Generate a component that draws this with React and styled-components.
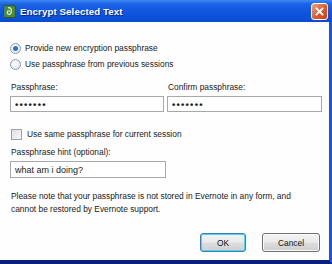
import React from 'react'
import styled, { createGlobalStyle } from 'styled-components'

const Global = createGlobalStyle`
  html, body { margin: 0; padding: 0; background: #fff; }
  body { font-family: "Liberation Sans", Arial, sans-serif; }
`

const Window = styled.div`
  width: 332px;
  height: 264px;
  display: flex;
  flex-direction: column;
  box-sizing: border-box;
  overflow: hidden;
`

const TitleBar = styled.div`
  height: 22px;
  flex: none;
  display: flex;
  align-items: center;
  padding: 0 4px 0 3px;
  background: linear-gradient(#3d8cf5 0%, #1b62e6 18%, #0d55de 60%, #0a4cd0 100%);
  color: #fff;
  gap: 4px;
`

const AppIcon = styled.div`
  width: 11px;
  height: 11px;
  border-radius: 2px;
  background: #4a8a3a;
  border: 1px solid #2d5a22;
  display: flex;
  align-items: center;
  justify-content: center;
`

const Title = styled.div`
  flex: 1;
  font-weight: bold;
  font-size: 9.7px;
  letter-spacing: 0.1px;
  text-shadow: 1px 1px 0 #0a2a8a;
`

const CloseBtn = styled.div`
  width: 15px;
  height: 15px;
  border: 1px solid #fff;
  border-radius: 3px;
  background: linear-gradient(135deg, #f0a080, #e05a2a 55%, #c8401a);
  display: flex;
  align-items: center;
  justify-content: center;
`

const Frame = styled.div`
  flex: 1;
  display: flex;
  flex-direction: column;
  border-right: 3px solid #1456e0;
  border-bottom: 4px solid #0a1f7a;
  background: #fefefe;
`

const Body = styled.div`
  flex: 1;
  display: flex;
  flex-direction: column;
  padding: 18px 8px 0 10px;
  font-size: 8.4px;
  color: #1a1a1a;
`

const RadioRow = styled.label`
  display: flex;
  align-items: center;
  gap: 4px;
  height: 16px;
`

const Radio = styled.span`
  width: 9px;
  height: 9px;
  border-radius: 50%;
  border: 1px solid #8a9aae;
  background: radial-gradient(circle at 40% 40%, #fff, #dde3ea);
  display: flex;
  align-items: center;
  justify-content: center;
  &::after {
    content: '';
    width: 5px;
    height: 5px;
    border-radius: 50%;
    background: ${p => (p.$on ? '#2d6fcf' : 'transparent')};
  }
`

const Fields = styled.div`
  display: grid;
  grid-template-columns: 154px 155px;
  column-gap: 3px;
  margin-top: 10px;
`

const Field = styled.div`
  display: flex;
  flex-direction: column;
  gap: 3px;
`

const Label = styled.div`
  height: 11px;
  line-height: 11px;
  padding-left: 1px;
`

const Input = styled.div`
  height: ${p => p.$h || 16}px;
  box-sizing: border-box;
  border: 1px solid #a8a8a8;
  background: #fff;
  display: flex;
  align-items: center;
  padding-left: 4px;
  width: ${p => p.$w || 'auto'};
  font-size: ${p => (p.$dots ? '9.5px' : '9px')};
  letter-spacing: ${p => (p.$dots ? '1.2px' : '0')};
  font-weight: ${p => (p.$dots ? 'bold' : 'normal')};
`

const CheckRow = styled.label`
  display: flex;
  align-items: center;
  gap: 5px;
  margin-top: 16px;
  padding-left: 1px;
  height: 12px;
`

const Box = styled.span`
  width: 9px;
  height: 9px;
  border: 1px solid #9aa0a8;
  background: linear-gradient(135deg, #dcdfe3, #f7f7f7);
`

const Hint = styled(Field)`
  margin-top: 7px;
`

const Note = styled.p`
  margin: 12px 0 0 1px;
  line-height: 12.5px;
  white-space: nowrap;
`

const Buttons = styled.div`
  margin-top: auto;
  margin-bottom: 8px;
  display: flex;
  justify-content: flex-end;
  gap: 16px;
  padding-right: 1px;
`

const Button = styled.div`
  width: ${p => p.$w}px;
  height: 19px;
  box-sizing: border-box;
  border-radius: 3px;
  border: 1px solid ${p => (p.$def ? '#3c7fb1' : '#707070')};
  background: linear-gradient(#f2f2f2 0%, #ebebeb 48%, #dddddd 52%, #cfcfcf 100%);
  box-shadow: inset 0 0 0 1px ${p => (p.$def ? '#48d5f8' : '#fbfbfb')};
  display: flex;
  align-items: center;
  justify-content: center;
  font-size: 8.4px;
  color: #111;
`

export default function App() {
  return (
    <>
      <Global />
      <Window>
        <TitleBar>
          <AppIcon>
            <svg width="7" height="8" viewBox="0 0 7 8">
              <path d="M2 1 C4 0 6 2 5 4 C6 6 4 8 2 7 C1 6 1 5 2 4 L4 4" stroke="#e8f5d8" strokeWidth="1.2" fill="none" />
            </svg>
          </AppIcon>
          <Title>Encrypt Selected Text</Title>
          <CloseBtn>
            <svg width="9" height="9" viewBox="0 0 9 9">
              <path d="M1.5 1.5 L7.5 7.5 M7.5 1.5 L1.5 7.5" stroke="#fff" strokeWidth="1.8" strokeLinecap="square" />
            </svg>
          </CloseBtn>
        </TitleBar>
        <Frame>
          <Body>
            <RadioRow><Radio $on />Provide new encryption passphrase</RadioRow>
            <RadioRow><Radio />Use passphrase from previous sessions</RadioRow>
            <Fields>
              <Field>
                <Label>Passphrase:</Label>
                <Input $dots>•••••••</Input>
              </Field>
              <Field>
                <Label>Confirm passphrase:</Label>
                <Input $dots>•••••••</Input>
              </Field>
            </Fields>
            <CheckRow><Box />Use same passphrase for current session</CheckRow>
            <Hint>
              <Label>Passphrase hint (optional):</Label>
              <Input $w="156px" $h={17}>what am i doing?</Input>
            </Hint>
            <Note>
              Please note that your passphrase is not stored in Evernote in any form, and
              <br />
              cannot be restored by Evernote support.
            </Note>
            <Buttons>
              <Button $w={46} $def>OK</Button>
              <Button $w={58}>Cancel</Button>
            </Buttons>
          </Body>
        </Frame>
      </Window>
    </>
  )
}
